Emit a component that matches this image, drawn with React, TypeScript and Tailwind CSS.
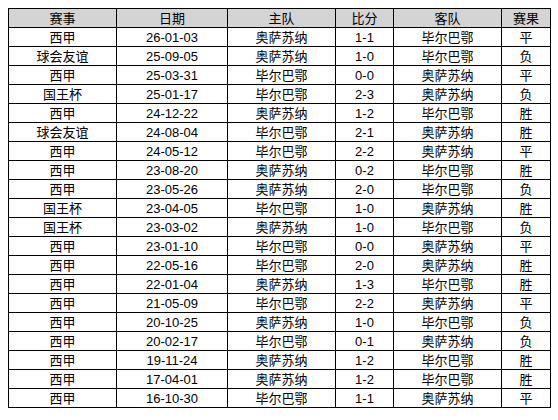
const rows: string[][] = [
  ['西甲', '26-01-03', '奥萨苏纳', '1-1', '毕尔巴鄂', '平'],
  ['球会友谊', '25-09-05', '奥萨苏纳', '1-0', '毕尔巴鄂', '负'],
  ['西甲', '25-03-31', '毕尔巴鄂', '0-0', '奥萨苏纳', '平'],
  ['国王杯', '25-01-17', '毕尔巴鄂', '2-3', '奥萨苏纳', '负'],
  ['西甲', '24-12-22', '奥萨苏纳', '1-2', '毕尔巴鄂', '胜'],
  ['球会友谊', '24-08-04', '毕尔巴鄂', '2-1', '奥萨苏纳', '胜'],
  ['西甲', '24-05-12', '毕尔巴鄂', '2-2', '奥萨苏纳', '平'],
  ['西甲', '23-08-20', '奥萨苏纳', '0-2', '毕尔巴鄂', '胜'],
  ['西甲', '23-05-26', '奥萨苏纳', '2-0', '毕尔巴鄂', '负'],
  ['国王杯', '23-04-05', '毕尔巴鄂', '1-0', '奥萨苏纳', '胜'],
  ['国王杯', '23-03-02', '奥萨苏纳', '1-0', '毕尔巴鄂', '负'],
  ['西甲', '23-01-10', '毕尔巴鄂', '0-0', '奥萨苏纳', '平'],
  ['西甲', '22-05-16', '毕尔巴鄂', '2-0', '奥萨苏纳', '胜'],
  ['西甲', '22-01-04', '奥萨苏纳', '1-3', '毕尔巴鄂', '胜'],
  ['西甲', '21-05-09', '毕尔巴鄂', '2-2', '奥萨苏纳', '平'],
  ['西甲', '20-10-25', '奥萨苏纳', '1-0', '毕尔巴鄂', '负'],
  ['西甲', '20-02-17', '毕尔巴鄂', '0-1', '奥萨苏纳', '负'],
  ['西甲', '19-11-24', '奥萨苏纳', '1-2', '毕尔巴鄂', '胜'],
  ['西甲', '17-04-01', '奥萨苏纳', '1-2', '毕尔巴鄂', '胜'],
  ['西甲', '16-10-30', '毕尔巴鄂', '1-1', '奥萨苏纳', '平'],
];

const headers = ['赛事', '日期', '主队', '比分', '客队', '赛果'];
const widths = ['w-[108px]', 'w-[111px]', 'w-[108px]', 'w-[58px]', 'w-[108px]', 'w-[49px]'];

export default function App() {
  return (
    <div className="bg-white w-[558px] h-[420px] p-2 font-['Liberation_Sans','Noto_Sans_CJK_SC',sans-serif] text-[13px] text-black">
      <table className="border-collapse table-fixed w-[542px]">
        <thead>
          <tr className="bg-[#d4d4d4] h-[19px]">
            {headers.map((h, i) => (
              <th key={h} className={`${widths[i]} border border-black p-0 font-normal text-center leading-[17px]`}>
                {h}
              </th>
            ))}
          </tr>
        </thead>
        <tbody>
          {rows.map((r, ri) => (
            <tr key={ri} className="h-[19px]">
              {r.map((c, ci) => (
                <td key={ci} className="border border-black p-0 text-center leading-[17px]">
                  {c}
                </td>
              ))}
            </tr>
          ))}
        </tbody>
      </table>
    </div>
  );
}
